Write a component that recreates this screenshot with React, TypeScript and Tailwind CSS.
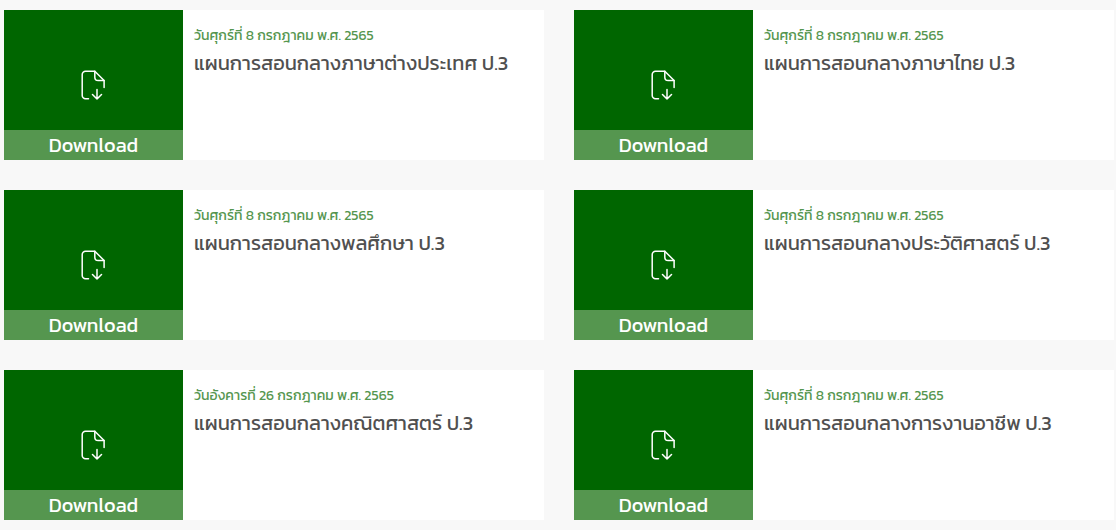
type Plan = {
  date: string;
  title: string;
};

const plans: Plan[] = [
  { date: "วันศุกร์ที่ 8 กรกฎาคม พ.ศ. 2565", title: "แผนการสอนกลางภาษาต่างประเทศ ป.3" },
  { date: "วันศุกร์ที่ 8 กรกฎาคม พ.ศ. 2565", title: "แผนการสอนกลางภาษาไทย ป.3" },
  { date: "วันศุกร์ที่ 8 กรกฎาคม พ.ศ. 2565", title: "แผนการสอนกลางพลศึกษา ป.3" },
  { date: "วันศุกร์ที่ 8 กรกฎาคม พ.ศ. 2565", title: "แผนการสอนกลางประวัติศาสตร์ ป.3" },
  { date: "วันอังคารที่ 26 กรกฎาคม พ.ศ. 2565", title: "แผนการสอนกลางคณิตศาสตร์ ป.3" },
  { date: "วันศุกร์ที่ 8 กรกฎาคม พ.ศ. 2565", title: "แผนการสอนกลางการงานอาชีพ ป.3" },
];

function FileDownloadIcon() {
  return (
    <svg
      width="25"
      height="30"
      viewBox="0 0 25 30"
      fill="none"
      stroke="currentColor"
      strokeWidth="1.5"
      strokeLinecap="round"
      strokeLinejoin="round"
      aria-hidden="true"
    >
      <path d="M7.5 28.8H4.5a3.3 3.3 0 0 1-3.3-3.3v-21A3.3 3.3 0 0 1 4.5 1.2h9.3l9.3 9.3v7" />
      <path d="M13.8 1.2v6a3.3 3.3 0 0 0 3.3 3.3h6" />
      <path d="M16 19.5v9.4M11.5 24.5l4.5 4.5 4.5-4.5" />
    </svg>
  );
}

function PlanCard({ date, title }: Plan) {
  return (
    <article className="flex min-h-[150px] bg-white">
      <a href="#" className="flex w-[179px] shrink-0 flex-col bg-[#006600] text-white">
        <span className="flex flex-1 items-end justify-center pb-[30px]">
          <FileDownloadIcon />
        </span>
        <span className="bg-[#55964f] text-center text-xl leading-[30px]">
          Download
        </span>
      </a>
      <div className="min-w-0 flex-1 px-[11px] pt-4">
        <p className="text-sm leading-5 text-[#55964f]">{date}</p>
        <h3 className="text-xl leading-[34px] text-[#505050]">{title}</h3>
      </div>
    </article>
  );
}

export default function App() {
  return (
    <main className="min-h-screen bg-[#f8f8f8] pt-[10px] pr-0.5 pb-[10px] pl-1 font-[Kanit,'Noto_Sans',sans-serif]">
      <div className="grid grid-cols-2 gap-[30px]">
        {plans.map((plan, index) => (
          <PlanCard key={index} {...plan} />
        ))}
      </div>
    </main>
  );
}
